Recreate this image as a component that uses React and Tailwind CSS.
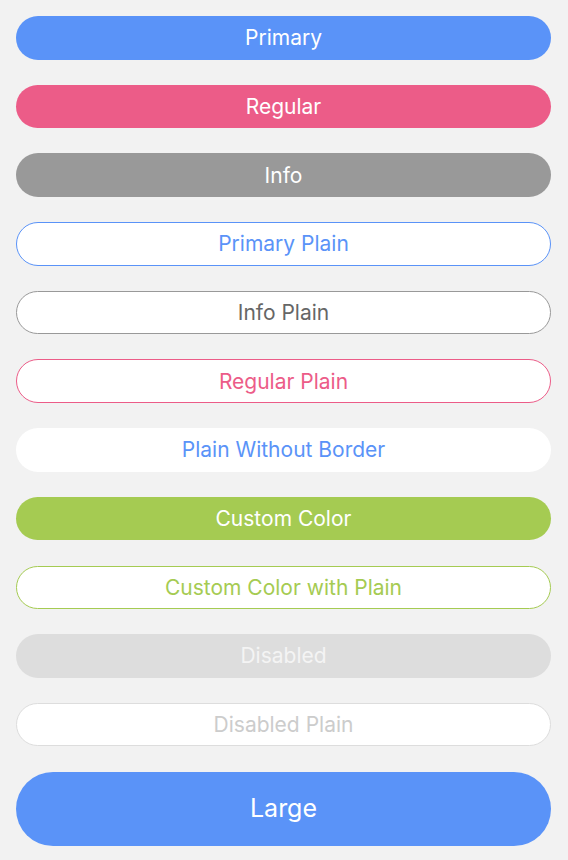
import React from "react";

const base =
  "flex w-full items-center justify-center rounded-full text-[21px] leading-none font-normal";

export default function App() {
  return (
    <div
      className="min-h-[860px] w-full bg-[#f2f2f2] pl-4 pr-[17px] pt-4"
      style={{ fontFamily: "Inter, 'Noto Sans', sans-serif" }}
    >
      <div className="flex flex-col gap-[25.2px]">
        <button className={`${base} h-[43.5px] bg-[#5a93f8] text-white`}>Primary</button>
        <button className={`${base} h-[43.5px] bg-[#ec5c88] text-white`}>Regular</button>
        <button className={`${base} h-[43.5px] bg-[#999999] text-white`}>Info</button>
        <button className={`${base} h-[43.5px] border-[1.5px] border-[#5a93f8] bg-white text-[#5a93f8]`}>Primary Plain</button>
        <button className={`${base} h-[43.5px] border-[1.5px] border-[#999999] bg-white text-[#666666]`}>Info Plain</button>
        <button className={`${base} h-[43.5px] border-[1.5px] border-[#ec5c88] bg-white text-[#ec5c88]`}>Regular Plain</button>
        <button className={`${base} h-[43.5px] bg-white text-[#5a93f8]`}>Plain Without Border</button>
        <button className={`${base} h-[43.5px] bg-[#a5cb52] text-white`}>Custom Color</button>
        <button className={`${base} h-[43.5px] border-[1.5px] border-[#a5cb52] bg-white text-[#a5cb52]`}>Custom Color with Plain</button>
        <button className={`${base} h-[43.5px] bg-[#dddddd] text-[#f4f4f4]`}>Disabled</button>
        <button className={`${base} h-[43.5px] border-[1.5px] border-[#dddddd] bg-white text-[#cccccc]`}>Disabled Plain</button>
        <button className={`${base} h-[74.5px] bg-[#5a93f8] !text-[25px] text-white`}>Large</button>
      </div>
    </div>
  );
}
